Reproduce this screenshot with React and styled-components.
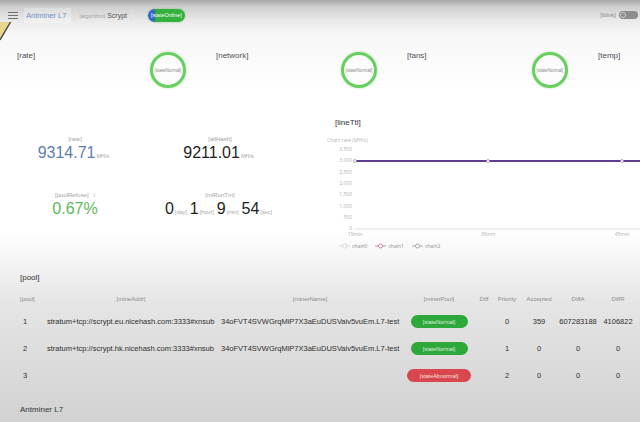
import React from "react";
import styled, { createGlobalStyle } from "styled-components";

const GlobalStyle = createGlobalStyle`
  html, body {
    margin: 0;
    padding: 0;
    overflow: hidden;
  }
  body {
    font-family: "Liberation Sans", Arial, sans-serif;
    background: linear-gradient(
      to bottom,
      #a9a9a9 0px,
      #cfcfcf 7px,
      #e9e9e9 20px,
      #f7f7f7 34px,
      #ffffff 90px,
      #ffffff 230px,
      #f4f4f4 262px,
      #e6e6e6 300px,
      #dcdcdc 360px,
      #d2d2d2 422px
    );
  }
`;

const Page = styled.div`
  position: relative;
  width: 640px;
  height: 422px;
  overflow: hidden;
  display: flex;
  flex-direction: column;
`;

const TopBar = styled.div`
  height: 30px;
  display: flex;
  align-items: center;
  padding: 0 0 0 8px;
`;

const Burger = styled.div`
  width: 10px;
  display: flex;
  flex-direction: column;
  gap: 2px;
  margin-right: 6px;
  span {
    height: 1px;
    background: #6f6f6f;
  }
`;

const Brand = styled.div`
  font-size: 7.5px;
  color: #6f8fc4;
  padding: 3px 5px 3px 2px;
  background: rgba(255, 255, 255, 0.25);
`;

const Algo = styled.div`
  margin-left: 3px;
  padding: 3px 4px;
  border-left: 1px solid #dedede;
  border-right: 1px solid #dedede;
  font-size: 7px;
  color: #555;
  small {
    font-size: 5.5px;
    color: #a0a0a0;
    margin-right: 2px;
  }
`;

const OnlinePill = styled.div`
  margin-left: 16px;
  height: 13px;
  width: 37px;
  border-radius: 7px;
  background: linear-gradient(to right, #3466c8 0px, #3466c8 6px, #34b03c 8px);
  color: #fff;
  font-size: 5.5px;
  display: flex;
  align-items: center;
  justify-content: center;
  box-shadow: 0 0 2px rgba(40, 170, 60, 0.6);
`;

const Blink = styled.div`
  margin-left: auto;
  margin-right: 2px;
  display: flex;
  align-items: center;
  gap: 3px;
  font-size: 6px;
  color: #8a8a8a;
`;

const Toggle = styled.div`
  width: 18px;
  height: 8px;
  border-radius: 4px;
  background: #8d8d8d;
  display: flex;
  align-items: center;
  padding-left: 1px;
  span {
    width: 6px;
    height: 6px;
    border-radius: 50%;
    border: 1px solid #c9c9c9;
    box-sizing: border-box;
  }
`;

const Corner = styled.svg`
  position: absolute;
  left: 0;
  top: 21px;
`;

const StatusRow = styled.div`
  height: 80px;
  display: flex;
  padding: 20px 0 0 12px;
  box-sizing: border-box;
`;

const StatusCard = styled.div`
  flex: 0 0 191px;
  display: flex;
  align-items: flex-start;
  padding: 0 17px 0 ${(p) => (p.first ? "5px" : "13px")};
  box-sizing: border-box;
`;

const CardTitle = styled.div`
  font-size: 8px;
  color: #505050;
  margin-top: 1px;
`;

const Ring = styled.div`
  margin-left: auto;
  margin-top: 2px;
  width: 36px;
  height: 36px;
  border-radius: 50%;
  border: 3px solid #66cf5e;
  box-sizing: border-box;
  box-shadow: 0 0 2px rgba(98, 205, 90, 0.6);
  display: flex;
  align-items: center;
  justify-content: center;
  font-size: 4.5px;
  color: #8a8a8a;
  overflow: hidden;
  white-space: nowrap;
`;

const Middle = styled.div`
  height: 152px;
  display: flex;
`;

const Stats = styled.div`
  width: 320px;
  display: grid;
  grid-template-columns: 150px 140px;
  grid-template-rows: 56px 40px;
  padding-top: 26px;
  box-sizing: border-box;
`;

const Stat = styled.div`
  display: flex;
  flex-direction: column;
  align-items: center;
`;

const StatLabel = styled.div`
  font-size: 6px;
  color: #a3a3a3;
  height: 9px;
`;

const StatValue = styled.div`
  margin-top: -1px;
  font-size: 16px;
  color: ${(p) => p.color || "#1e1e1e"};
  white-space: nowrap;
  display: flex;
  align-items: baseline;
`;

const Unit = styled.span`
  font-size: 5.5px;
  color: #a8a8a8;
  margin-left: 1px;
  margin-right: 3px;
`;

const ChartPanel = styled.div`
  flex: 1;
  padding: 8px 0 0 7px;
  display: flex;
  flex-direction: column;
`;

const ChartTitle = styled.div`
  font-size: 8px;
  color: #333;
  padding-left: 8px;
`;

const Legend = styled.div`
  display: flex;
  gap: 8px;
  padding-left: 12px;
  margin-top: 4px;
  font-family: "Open Sans", sans-serif;
  font-size: 5px;
  color: #8f8f8f;
`;

const LegendItem = styled.div`
  display: flex;
  align-items: center;
  gap: 2px;
`;

const PoolSection = styled.div`
  flex: 1;
  padding: 11px 0 0 20px;
  display: flex;
  flex-direction: column;
`;

const SectionTitle = styled.div`
  font-size: 8px;
  color: #333;
`;

const Table = styled.div`
  margin-top: 8px;
  display: grid;
  grid-template-columns: 24px 174px 184px 74px 16px 30px 34px 44px 36px;
  grid-template-rows: 18px;
  grid-auto-rows: 27px;
  font-size: 7.5px;
  color: #2e2e2e;
`;

const HeadRow = styled.div`
  display: contents;
  & > div {
    font-size: 6px;
    color: #8c8c8c;
  }
`;

const Row = styled.div`
  display: contents;
`;

const Cell = styled.div`
  display: flex;
  align-items: center;
  justify-content: ${(p) => (p.left ? "flex-start" : "center")};
  padding-left: ${(p) => (p.pad ? "3px" : "0")};
  white-space: nowrap;
`;

const StatePill = styled.div`
  height: 13px;
  width: ${(p) => (p.bad ? "64px" : "57px")};
  border-radius: 7px;
  background: ${(p) => (p.bad ? "#d9474e" : "#2ea83a")};
  color: rgba(255, 255, 255, 0.85);
  font-size: 5.5px;
  display: flex;
  align-items: center;
  justify-content: center;
`;

const Footer = styled.div`
  margin-top: auto;
  margin-bottom: 8px;
  font-size: 8px;
  color: #333;
`;

const cards = ["[rate]", "[network]", "[fans]", "[temp]"];

const pools = [
  {
    id: 1,
    addr: "stratum+tcp://scrypt.eu.nicehash.com:3333#xnsub",
    name: "34oFVT4SVWGrqMiP7X3aEuDUSVaiv5vuEm.L7-test",
    bad: false,
    diff: "",
    pri: "0",
    acc: "359",
    da: "607283188",
    dr: "4106822",
  },
  {
    id: 2,
    addr: "stratum+tcp://scrypt.hk.nicehash.com:3333#xnsub",
    name: "34oFVT4SVWGrqMiP7X3aEuDUSVaiv5vuEm.L7-test",
    bad: false,
    diff: "",
    pri: "1",
    acc: "0",
    da: "0",
    dr: "0",
  },
  { id: 3, addr: "", name: "", bad: true, diff: "", pri: "2", acc: "0", da: "0", dr: "0" },
];

const yTicks = ["3,500", "3,000", "2,500", "2,000", "1,500", "1,000", "500", "0"];

const Chart = () => (
  <svg width="313" height="106" style={{ marginTop: 6 }}>
    <text x="0" y="9" fontSize="5" fill="#b3b3b3" fontFamily="Open Sans, sans-serif">
      Chain rate (MH/s)
    </text>
    {yTicks.map((t, i) => (
      <text
        key={t}
        x="25"
        y={18 + i * 11.3}
        fontSize="5"
        fill="#b3b3b3"
        textAnchor="end"
        fontFamily="Open Sans, sans-serif"
      >
        {t}
      </text>
    ))}
    <line x1="28" y1="96" x2="313" y2="96" stroke="#d8d8d8" strokeWidth="0.8" />
    <line x1="28" y1="28" x2="313" y2="28" stroke="#5b3e8f" strokeWidth="2" />
    <circle cx="28" cy="28" r="1.5" fill="#fff" stroke="#8a7aa8" strokeWidth="0.6" />
    <circle cx="161" cy="28" r="1.5" fill="#fff" stroke="#8a7aa8" strokeWidth="0.6" />
    <circle cx="295" cy="28" r="1.5" fill="#fff" stroke="#8a7aa8" strokeWidth="0.6" />
    {[
      ["15min", 28],
      ["30min", 161],
      ["45min", 295],
    ].map(([l, x]) => (
      <text
        key={l}
        x={x}
        y="103"
        fontSize="5"
        fill="#b3b3b3"
        textAnchor="middle"
        fontFamily="Open Sans, sans-serif"
      >
        {l}
      </text>
    ))}
  </svg>
);

const LegendMark = ({ color }) => (
  <svg width="11" height="6">
    <line x1="0" y1="3" x2="11" y2="3" stroke={color} strokeWidth="0.7" />
    <circle cx="5.5" cy="3" r="2" fill="#fff" stroke={color} strokeWidth="0.7" />
  </svg>
);

export default function App() {
  return (
    <Page>
      <GlobalStyle />
      <Corner width="11" height="20" viewBox="0 0 11 20">
        <polygon points="0,1 10,1 0,19" fill="#e6d98f" />
        <line x1="10.5" y1="1" x2="0" y2="19" stroke="#444" strokeWidth="1.4" />
      </Corner>

      <TopBar>
        <Burger>
          <span />
          <span />
          <span />
        </Burger>
        <Brand>Antminer L7</Brand>
        <Algo>
          <small>[algorithm]</small>Scrypt
        </Algo>
        <OnlinePill>[stateOnline]</OnlinePill>
        <Blink>
          [blink]
          <Toggle>
            <span />
          </Toggle>
        </Blink>
      </TopBar>

      <StatusRow>
        {cards.map((c, i) => (
          <StatusCard key={c} first={i === 0}>
            <CardTitle>{c}</CardTitle>
            {i < 3 && <Ring>[stateNormal]</Ring>}
          </StatusCard>
        ))}
      </StatusRow>

      <Middle>
        <Stats>
          <Stat>
            <StatLabel>[rate]</StatLabel>
            <StatValue color="#5b7db1">
              9314.71<Unit>MH/s</Unit>
            </StatValue>
          </Stat>
          <Stat>
            <StatLabel>[allHash]</StatLabel>
            <StatValue>
              9211.01<Unit>MH/s</Unit>
            </StatValue>
          </Stat>
          <Stat>
            <StatLabel>[poolRefuse] &nbsp;&nbsp;i</StatLabel>
            <StatValue color="#5cb85c">0.67%</StatValue>
          </Stat>
          <Stat>
            <StatLabel>[miRunTm]</StatLabel>
            <StatValue>
              0<Unit>[day]</Unit>1<Unit>[hour]</Unit>9<Unit>[min]</Unit>54<Unit>[sec]</Unit>
            </StatValue>
          </Stat>
        </Stats>

        <ChartPanel>
          <ChartTitle>[lineTtl]</ChartTitle>
          <Chart />
          <Legend>
            <LegendItem>
              <LegendMark color="#c8c8c8" />
              chain0
            </LegendItem>
            <LegendItem>
              <LegendMark color="#b0608c" />
              chain1
            </LegendItem>
            <LegendItem>
              <LegendMark color="#8a8a8a" />
              chain2
            </LegendItem>
          </Legend>
        </ChartPanel>
      </Middle>

      <PoolSection>
        <SectionTitle>[pool]</SectionTitle>
        <Table>
          <HeadRow>
            <Cell left>[pool]</Cell>
            <Cell>[mineAddr]</Cell>
            <Cell>[minerName]</Cell>
            <Cell>[minerPool]</Cell>
            <Cell>Diff</Cell>
            <Cell>Priority</Cell>
            <Cell>Accepted</Cell>
            <Cell>DiffA</Cell>
            <Cell>DiffR</Cell>
          </HeadRow>
          {pools.map((p) => (
            <Row key={p.id}>
              <Cell left pad>
                {p.id}
              </Cell>
              <Cell left pad>
                {p.addr}
              </Cell>
              <Cell left pad>
                {p.name}
              </Cell>
              <Cell>
                <StatePill bad={p.bad}>{p.bad ? "[stateAbnormal]" : "[stateNormal]"}</StatePill>
              </Cell>
              <Cell>{p.diff}</Cell>
              <Cell>{p.pri}</Cell>
              <Cell>{p.acc}</Cell>
              <Cell>{p.da}</Cell>
              <Cell>{p.dr}</Cell>
            </Row>
          ))}
        </Table>
        <Footer>Antminer L7</Footer>
      </PoolSection>
    </Page>
  );
}
